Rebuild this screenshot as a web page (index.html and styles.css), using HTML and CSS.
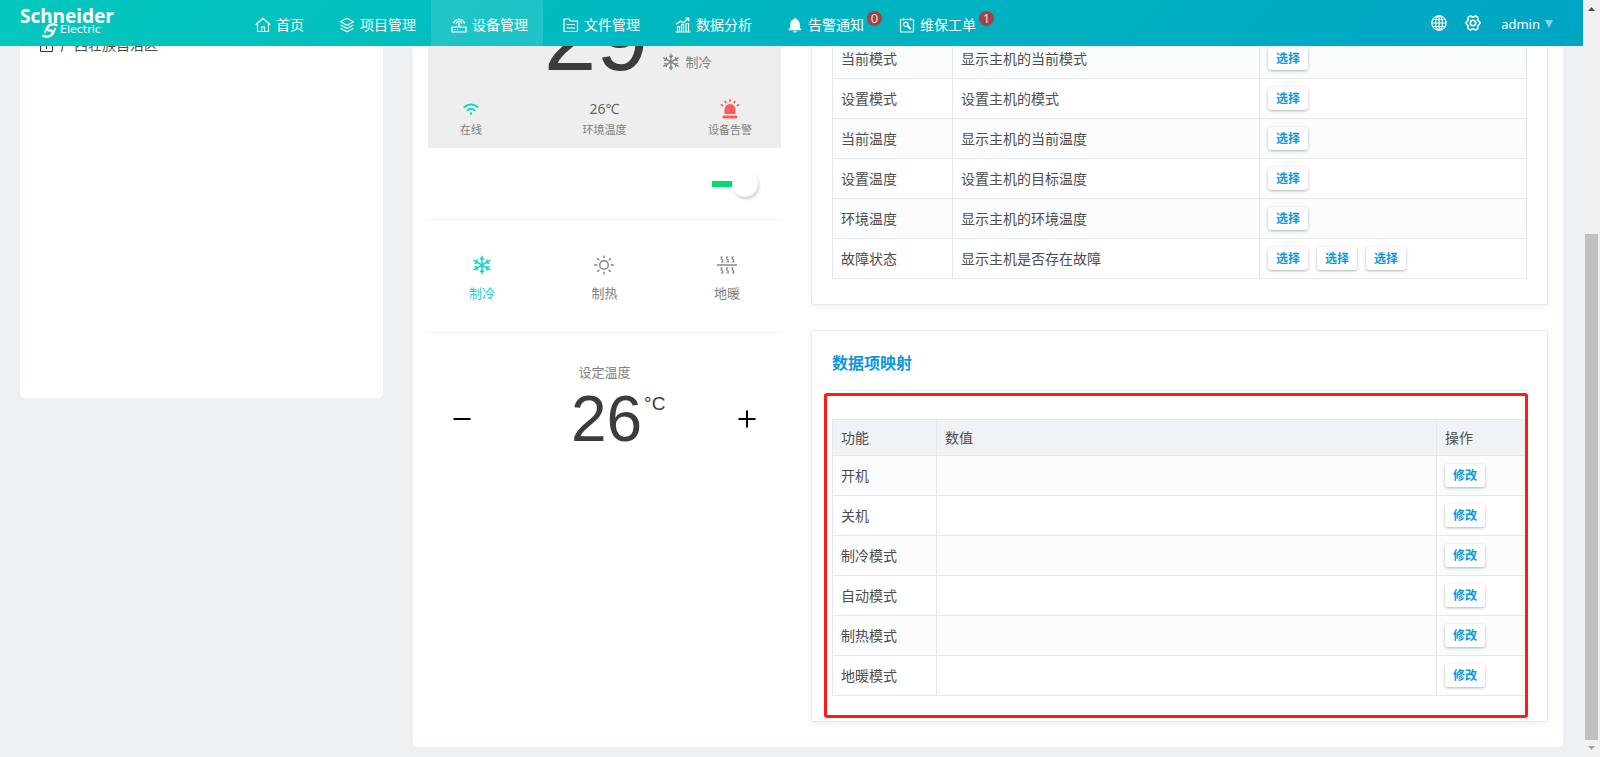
FILE: index.html
```
<!DOCTYPE html>
<html lang="zh-CN">
<head>
<meta charset="utf-8">
<title>设备管理</title>
<link rel="stylesheet" href="styles.css">
</head>
<body>
<header class="topbar">
  <a class="logo" href="#" aria-label="Schneider Electric">
    <span class="logo-name">Schneider</span>
    <span class="logo-sub">
      <svg width="16" height="15" viewBox="0 0 16 15" fill="none" stroke="#fff" stroke-linecap="round"><path stroke-width="2.4" d="M14.500 2.200C11 .6 6.500 1.500 5.500 4.500 5 6 5.500 6.800 7 7.500M1.500 12.800C5 14.400 9.500 13.500 10.500 10.500 11 9 10.500 8.200 9 7.500"/><path stroke-width="1.700" d="M13 5.500C12 10 11 11.500 8 12.800M3 9.500C4 5 5 3.500 8 2.200M6 7.500h4"/></svg>
      <span>Electric</span>
    </span>
  </a>
  <nav class="nav">
    <a class="nav-item" href="#"><svg class="ic" viewBox="0 0 16 16"><path d="M.8 7.800 8 1.200l7.200 6.600M2.500 6.800v7.700h11V6.800M6.500 14.500V10h3v4.500"/></svg><span>首页</span></a>
    <a class="nav-item" href="#"><svg class="ic" viewBox="0 0 16 16"><path d="M8 1.200 14.500 4.800 8 8.400 1.500 4.800zM1.500 8 8 11.600 14.500 8M1.500 11.200 8 14.800l6.500-3.600"/></svg><span>项目管理</span></a>
    <a class="nav-item active" href="#"><svg class="ic" viewBox="0 0 16 16"><path d="M1 10h14v5H1zM3.500 12.500h1M6 12.500h1M8 10V5.500M2.500 6.500a5.700 5.700 0 0 1 11 0M5 6.700a3.100 3.100 0 0 1 6 0"/></svg><span>设备管理</span></a>
    <a class="nav-item" href="#"><svg class="ic" viewBox="0 0 16 16"><path d="M1 2h5l1.500 2H14.500v10.500H1zM3.500 7.500h8.500M3.500 11h8.500"/></svg><span>文件管理</span></a>
    <a class="nav-item" href="#"><svg class="ic" viewBox="0 0 16 16"><path d="M.5 15h15M2.500 15V9.500h2V15M6.500 15V7.500h2V15M11 15V6.500h2.500V15M1 7.500 5.500 4 8 6l5.500-4.500M10.500 1.200h3.300v3"/></svg><span>数据分析</span></a>
    <a class="nav-item" href="#"><svg class="ic solid" viewBox="0 0 16 16"><path d="M8 1a1.300 1.300 0 0 1 1.300 1.300C11.800 2.900 12.800 5 12.800 7.500v3L14.500 12.500v.8h-13v-.8L3.200 10.500v-3C3.200 5 4.200 2.900 6.700 2.300A1.300 1.300 0 0 1 8 1zM6.200 14h3.600a1.800 1.500 0 0 1-3.600 0z"/></svg><span>告警通知</span><span class="badge">0</span></a>
    <a class="nav-item" href="#"><svg class="ic" viewBox="0 0 16 16"><path d="M1.500 2.500h13v12.500h-13zM4.500.8v3M11.500.8v3"/><path stroke-width="2" d="M8.300 8.800l3.500 3.500"/><circle cx="6.800" cy="7.300" r="2.200"/></svg><span>维保工单</span><span class="badge">1</span></a>
  </nav>
  <div class="tools">
    <button class="tool" type="button" aria-label="语言"><svg class="ic" viewBox="0 0 16 16"><circle cx="8" cy="8" r="7.200"/><ellipse cx="8" cy="8" rx="3.500" ry="7.200"/><path d="M8 .8v14.400M1 8h14M2 4.500h12M2 11.500h12"/></svg></button>
    <button class="tool" type="button" aria-label="设置"><svg class="ic gear" viewBox="0 0 16 16"><path d="M5.500 1 8 2.300 10.500 1l2.300 1.400.1 2.800L15.300 8l-2.400 2.800-.1 2.800L10.500 15 8 13.700 5.500 15l-2.300-1.400-.1-2.800L.7 8l2.400-2.800.1-2.800z"/><circle cx="8" cy="8" r="2.700"/></svg></button>
    <button class="user" type="button">admin<svg width="8" height="8" viewBox="0 0 8 8"><path fill="#fff" fill-opacity=".5" d="M0 0h8L4 8z"/></svg></button>
  </div>
</header>

<main class="page">
  <aside class="tree">
    <div class="tree-item">
      <svg width="13" height="13" viewBox="0 0 13 13" fill="none" stroke="#333"><path d="M.5.500h12v12H.5zM6.500 3v7M3 6.500h7"/></svg>
      <span>广西壮族自治区</span>
    </div>
  </aside>

  <section class="panel">
    <div class="device">
      <div class="status">
        <div class="now">
          <span class="now-temp">29</span>
          <span class="now-mode"><svg class="snow" viewBox="0 0 20 20"><use href="#flake"/></svg>制冷</span>
        </div>
        <div class="readings">
          <div class="cell"><svg width="16" height="12" viewBox="0 0 16 12" fill="none" stroke="#13d4c4" stroke-width="2" stroke-linecap="round"><path d="M1.500 4a9.500 9.500 0 0 1 13 0M4.500 7.300a5 5 0 0 1 7 0"/><circle cx="8" cy="10.500" r=".5" stroke-width="1.500"/></svg><span>在线</span></div>
          <div class="cell"><b>26℃</b><span>环境温度</span></div>
          <div class="cell"><svg width="20" height="20" viewBox="0 0 20 20" fill="#ff5a5a"><path d="M4.500 15v-4.500a5.500 5.500 0 0 1 11 0V15z"/><rect x="2.500" y="16.500" width="15" height="3" rx="1.500"/><path fill="none" stroke="#ff5a5a" stroke-width="1.800" stroke-linecap="round" d="M10 1v1.200M5.300 2.500l.5 1M14.700 2.500l-.5 1M1.500 6l1 .5M18.500 6l-1 .5"/></svg><span>设备告警</span></div>
        </div>
      </div>
      <div class="power"><input class="switch" type="checkbox" role="switch" checked aria-label="开关"></div>
      <div class="modes">
        <button class="mode on" type="button"><svg class="mi" viewBox="0 0 20 20"><g id="flake"><path d="M10 .8v18.400M1.500 5.100l17 9.800M18.500 5.100l-17 9.800M8 3l2 2 2-2M8 17l2-2 2 2M2.500 8.500l3-1-.8-3M17.500 11.500l-3 1 .8 3M15.300 4.500l-.8 3 3 1M4.700 15.500l.8-3-3-1"/></g></svg><span>制冷</span></button>
        <button class="mode" type="button"><svg class="mi" viewBox="0 0 20 20"><circle cx="10" cy="10" r="4.300"/><path d="M10 .5v2.800M10 16.700v2.800M.3 10h2.900M16.800 10h2.900M3.200 3.200l2 2M14.800 14.800l2 2M16.800 3.200l-2 2M5.200 14.800l-2 2"/></svg><span>制热</span></button>
        <button class="mode" type="button"><svg class="mi" viewBox="0 0 20 20"><path d="M0 10h20"/><path stroke-width="1.200" d="M5.800 2H4.200v2l1.500 1v2H4M11.300 2H9.700v2l1.500 1v2H9.500M16.800 2h-1.600v2l1.500 1v2H15M5.800 13H4.200v2l1.500 1v2H4M11.300 13H9.700v2l1.500 1v2H9.500M16.800 13h-1.600v2l1.500 1v2H15"/></svg><span>地暖</span></button>
      </div>
      <div class="target">
        <span class="target-label">设定温度</span>
        <div class="stepper">
          <button class="step" type="button" aria-label="降低"><svg width="18" height="18" viewBox="0 0 18 18"><path stroke="#000" stroke-width="2" d="M.5 9h17"/></svg></button>
          <span class="target-temp">26<sup>°C</sup></span>
          <button class="step" type="button" aria-label="升高"><svg width="18" height="18" viewBox="0 0 18 18"><path stroke="#000" stroke-width="2" d="M.5 9h17M9 .5v17"/></svg></button>
        </div>
      </div>
    </div>

    <div class="cards">
      <section class="card functions">
        <table class="grid">
          <colgroup><col class="c-fn"><col class="c-desc"><col></colgroup>
          <tbody>
            <tr><td>当前模式</td><td>显示主机的当前模式</td><td><button class="btn" type="button">选择</button></td></tr>
            <tr><td>设置模式</td><td>设置主机的模式</td><td><button class="btn" type="button">选择</button></td></tr>
            <tr><td>当前温度</td><td>显示主机的当前温度</td><td><button class="btn" type="button">选择</button></td></tr>
            <tr><td>设置温度</td><td>设置主机的目标温度</td><td><button class="btn" type="button">选择</button></td></tr>
            <tr><td>环境温度</td><td>显示主机的环境温度</td><td><button class="btn" type="button">选择</button></td></tr>
            <tr><td>故障状态</td><td>显示主机是否存在故障</td><td><div class="btns"><button class="btn" type="button">选择</button><button class="btn" type="button">选择</button><button class="btn" type="button">选择</button></div></td></tr>
          </tbody>
        </table>
      </section>

      <section class="card mapping">
        <h2 class="title">数据项映射</h2>
        <div class="mapping-body">
          <table class="grid">
            <colgroup><col class="c-key"><col><col class="c-op"></colgroup>
            <thead><tr><th>功能</th><th>数值</th><th>操作</th></tr></thead>
            <tbody>
              <tr><td>开机</td><td></td><td><button class="btn" type="button">修改</button></td></tr>
              <tr><td>关机</td><td></td><td><button class="btn" type="button">修改</button></td></tr>
              <tr><td>制冷模式</td><td></td><td><button class="btn" type="button">修改</button></td></tr>
              <tr><td>自动模式</td><td></td><td><button class="btn" type="button">修改</button></td></tr>
              <tr><td>制热模式</td><td></td><td><button class="btn" type="button">修改</button></td></tr>
              <tr><td>地暖模式</td><td></td><td><button class="btn" type="button">修改</button></td></tr>
            </tbody>
          </table>
          <div class="highlight"></div>
        </div>
      </section>
    </div>
  </section>
</main>

<div class="scrollbar">
  <svg width="17" height="17" viewBox="0 0 17 17"><path fill="#505050" d="M5 11h7L8.500 7z"/></svg>
  <div class="track"><div class="thumb"></div></div>
  <svg width="17" height="17" viewBox="0 0 17 17"><path fill="#a3a3a3" d="M5 6h7l-3.500 4z"/></svg>
</div>
</body>
</html>
```
FILE: styles.css
```
* { box-sizing: border-box; }

html, body { height: 100%; }

body {
  margin: 0;
  padding-right: 17px;
  overflow: hidden;
  background: #edf1f4;
  color: #4d4d4d;
  font: 14px/20px "Noto Sans", "Noto Sans CJK SC", sans-serif;
}

button {
  margin: 0;
  padding: 0;
  border: 0;
  background: none;
  color: inherit;
  font: inherit;
  cursor: pointer;
}

a { color: inherit; text-decoration: none; }
svg { display: block; flex: none; }

/* Top bar */
.topbar {
  position: fixed;
  z-index: 2;
  top: 0;
  left: 0;
  right: 17px;
  height: 46px;
  display: flex;
  padding: 0 30px 0 20px;
  background: linear-gradient(135deg, #05c8be 0%, #00b5c1 50%, #00a5c4 100%);
  color: #fff;
}

.logo { width: 215px; padding-top: 9px; }

.logo-name {
  display: block;
  font: bold 19px/14px "Noto Sans", sans-serif;
}

.logo-sub {
  display: flex;
  gap: 2px;
  padding-left: 22px;
  font: 11px/13px "DejaVu Sans", sans-serif;
}

.nav { display: flex; flex: 1; }

.nav-item {
  position: relative;
  display: flex;
  align-items: center;
  gap: 5px;
  padding: 4px 15px 0 20px;
}

.nav-item.active { background: rgba(255, 255, 255, .12); }

.ic {
  width: 16px;
  height: 16px;
  fill: none;
  stroke: #fff;
  stroke-width: 1.2;
  stroke-linejoin: round;
}

.ic.solid { fill: #fff; stroke: none; }
.ic.gear { stroke-width: 1.6; }

.badge {
  position: absolute;
  top: 11px;
  right: -3px;
  width: 15px;
  height: 15px;
  border-radius: 50%;
  background: #a93f44;
  color: #dbe0e0;
  font: 13px/15px "Noto Sans", sans-serif;
  text-align: center;
}

.tools { display: flex; align-items: center; gap: 18px; }

.user {
  display: flex;
  align-items: center;
  gap: 5px;
  margin-left: 2px;
  padding-top: 2px;
  font-size: 13px;
}

/* Page columns */
.page {
  display: grid;
  grid-template-columns: minmax(0, 363fr) minmax(0, 1150fr);
  align-items: start;
  gap: 30px;
  padding: 0 20px;
}

.tree {
  min-height: 398px;
  padding: 35px 20px;
  border-radius: 0 0 5px 5px;
  background: #fff;
}

.tree-item { display: flex; align-items: center; gap: 7px; }

.panel {
  display: grid;
  grid-template-columns: minmax(0, 353fr) minmax(0, 737fr);
  align-items: start;
  gap: 30px;
  padding: 0 15px 25px;
  border-radius: 0 0 5px 5px;
  background: #fff;
}

/* Device preview */
.device { color: #808080; font-size: 13px; }

.status { height: 148px; background: #eee; }

.now {
  display: flex;
  align-items: flex-end;
  height: 86px;
  padding-left: 116px;
  gap: 13px;
}

.now-temp {
  color: #3c3c3c;
  font: 94px/70px "Liberation Sans", sans-serif;
  padding-bottom: 13px;
}

.now-mode { display: flex; align-items: center; gap: 6px; padding-bottom: 14px; }

.snow, .mi {
  width: 20px;
  height: 20px;
  fill: none;
  stroke: currentColor;
  stroke-width: 1.4;
}

.snow { width: 18px; height: 18px; }

.readings {
  display: grid;
  grid-template-columns: 1fr auto 1fr;
  padding: 10px 29px 0;
  font-size: 11px;
  line-height: 16px;
}

.cell {
  display: grid;
  grid-template-rows: 26px 16px;
  place-items: center;
  min-width: 28px;
}

.cell:first-child { justify-self: start; }
.cell:last-child { justify-self: end; }
.cell b { color: #666; font-size: 14px; font-weight: 400; }

.power {
  display: flex;
  justify-content: flex-end;
  align-items: center;
  height: 72px;
  padding-right: 23px;
  border-bottom: 1px solid #f2f2f2;
}

.switch {
  appearance: none;
  display: flex;
  justify-content: flex-end;
  align-items: center;
  width: 46px;
  height: 26px;
  margin: 0;
  background: linear-gradient(#00dd70, #00dd70) left center / 22px 6px no-repeat;
  border-radius: 3px 13px 13px 3px;
}

.switch::after {
  content: "";
  width: 26px;
  height: 26px;
  border-radius: 50%;
  background: #fff;
  box-shadow: 1px 2px 3px rgba(0, 0, 0, .2);
}

.modes {
  display: flex;
  justify-content: space-between;
  height: 113px;
  padding: 35px 41px 0;
  border-bottom: 1px solid #f2f2f2;
}

.mode {
  display: flex;
  flex-direction: column;
  align-items: center;
  gap: 8px;
  height: 50px;
}

.mode.on { color: #13d4c4; }

.target { padding: 29px 25px 0; text-align: center; }
.target-label { display: block; }

.stepper { display: flex; align-items: center; justify-content: space-between; }

.target-temp {
  position: relative;
  padding-left: 4px;
  color: #3c3c3c;
  font: 64px/74px "Liberation Sans", sans-serif;
}

.target-temp sup {
  position: absolute;
  top: 10px;
  left: 100%;
  padding-left: 2px;
  font-size: 19px;
  line-height: 24px;
}

/* Cards and tables */
.cards { display: grid; gap: 25px; }

.card {
  padding: 0 20px 25px;
  border: 1px solid #e4eaef;
  border-radius: 2px;
  box-shadow: 0 3px 6px rgba(0, 0, 0, .05);
}

.functions { padding-top: 38px; border-top: 0; }

.title {
  margin: 0;
  padding: 22px 0 17px;
  border-bottom: 1px solid #e9eef1;
  color: #0b97e0;
  font-size: 16px;
  line-height: 20px;
  font-weight: 600;
}

.mapping-body { position: relative; padding-top: 28px; }

/* Marks the mapping table */
.highlight {
  position: absolute;
  inset: 2px -1px -22px -8px;
  border: 3px solid #ff1a12;
  border-radius: 3px;
  pointer-events: none;
}

.grid {
  width: 100%;
  border-collapse: collapse;
  table-layout: fixed;
}

.grid th, .grid td {
  height: 40px;
  padding: 0 8px;
  border: 1px solid #e1e8ee;
  text-align: left;
  font-weight: 400;
}

.grid th { height: 36px; background: #eff3f6; }
.grid tbody tr:nth-child(odd) { background: #fafcfe; }

.c-fn { width: 120px; }
.c-desc { width: 307px; }
.c-key { width: 104px; }
.c-op { width: 90px; }

.btns { display: flex; gap: 9px; }

.btn {
  display: block;
  width: 40px;
  height: 23px;
  border-radius: 3px;
  background: #fff;
  box-shadow: 0 1px 3px rgba(0, 0, 0, .3);
  color: #0b97e0;
  font-size: 12px;
  font-weight: 600;
  line-height: 22px;
}

/* Window scrollbar */
.scrollbar {
  position: fixed;
  z-index: 3;
  top: 0;
  right: 0;
  bottom: 0;
  display: flex;
  flex-direction: column;
  width: 17px;
  background: #f1f1f1;
}

.track {
  flex: 1;
  display: flex;
  flex-direction: column;
  justify-content: flex-end;
  padding: 0 2px;
}

.thumb { height: 70%; background: #c1c1c1; }
```
